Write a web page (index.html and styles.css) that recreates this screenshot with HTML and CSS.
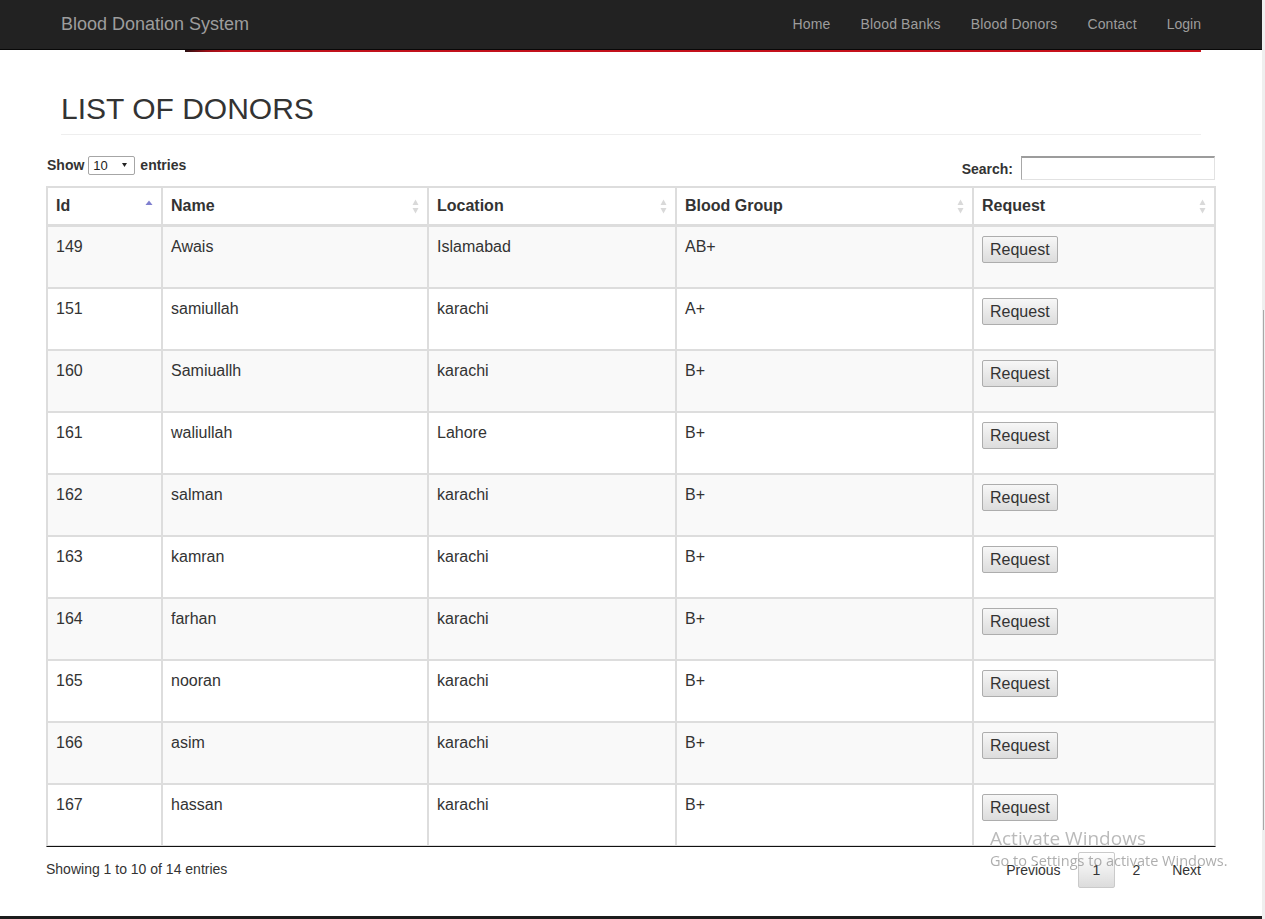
FILE: index.html
```html
<!DOCTYPE html>
<html lang="en">
<head>
<meta charset="utf-8">
<title>Blood Donation System - List of Donors</title>
<link rel="stylesheet" href="styles.css">
</head>
<body>
<nav class="navbar">
  <div class="container nav-inner">
    <a class="brand" href="#">Blood Donation System</a>
    <ul class="nav-links">
      <li><a href="#">Home</a></li>
      <li><a href="#">Blood Banks</a></li>
      <li><a href="#">Blood Donors</a></li>
      <li><a href="#">Contact</a></li>
      <li><a href="#">Login</a></li>
    </ul>
  </div>
</nav>
<div class="container"><div class="red-rule"></div></div>

<div class="container">
  <h2 class="page-header">LIST OF DONORS</h2>
</div>

<div class="dt-wrapper">
  <div class="dt-top">
    <label class="dt-length">Show
      <span class="select-wrap">
        <select class="dt-select"><option>10</option><option>25</option><option>50</option><option>100</option></select>
        <svg class="select-arrow" width="5" height="4" viewBox="0 0 5 4"><polygon points="0,0 5,0 2.5,4" fill="#222"/></svg>
      </span>
      entries</label>
    <label class="dt-filter">Search:<input class="dt-input" type="search"></label>
  </div>

  <table class="dt-table">
    <thead>
      <tr>
        <th class="c-id"><div class="th-inner"><span>Id</span><svg class="sort" width="8" height="15" viewBox="0 0 8 15"><polygon points="0.5,6 4,1.5 7.5,6" fill="#7f7fcf"/></svg></div></th>
        <th class="c-name"><div class="th-inner"><span>Name</span><svg class="sort" width="7" height="15" viewBox="0 0 7 15"><polygon points="0.5,6 3.5,0.5 6.5,6" fill="#d9d9d9"/><polygon points="0.5,9 3.5,14.5 6.5,9" fill="#d9d9d9"/></svg></div></th>
        <th class="c-loc"><div class="th-inner"><span>Location</span><svg class="sort" width="7" height="15" viewBox="0 0 7 15"><polygon points="0.5,6 3.5,0.5 6.5,6" fill="#d9d9d9"/><polygon points="0.5,9 3.5,14.5 6.5,9" fill="#d9d9d9"/></svg></div></th>
        <th class="c-grp"><div class="th-inner"><span>Blood Group</span><svg class="sort" width="7" height="15" viewBox="0 0 7 15"><polygon points="0.5,6 3.5,0.5 6.5,6" fill="#d9d9d9"/><polygon points="0.5,9 3.5,14.5 6.5,9" fill="#d9d9d9"/></svg></div></th>
        <th class="c-req"><div class="th-inner"><span>Request</span><svg class="sort" width="7" height="15" viewBox="0 0 7 15"><polygon points="0.5,6 3.5,0.5 6.5,6" fill="#d9d9d9"/><polygon points="0.5,9 3.5,14.5 6.5,9" fill="#d9d9d9"/></svg></div></th>
      </tr>
    </thead>
    <tbody>
      <tr class="odd"><td>149</td><td>Awais</td><td>Islamabad</td><td>AB+</td><td><button class="btn-req" type="button">Request</button></td></tr>
      <tr><td>151</td><td>samiullah</td><td>karachi</td><td>A+</td><td><button class="btn-req" type="button">Request</button></td></tr>
      <tr class="odd"><td>160</td><td>Samiuallh</td><td>karachi</td><td>B+</td><td><button class="btn-req" type="button">Request</button></td></tr>
      <tr><td>161</td><td>waliullah</td><td>Lahore</td><td>B+</td><td><button class="btn-req" type="button">Request</button></td></tr>
      <tr class="odd"><td>162</td><td>salman</td><td>karachi</td><td>B+</td><td><button class="btn-req" type="button">Request</button></td></tr>
      <tr><td>163</td><td>kamran</td><td>karachi</td><td>B+</td><td><button class="btn-req" type="button">Request</button></td></tr>
      <tr class="odd"><td>164</td><td>farhan</td><td>karachi</td><td>B+</td><td><button class="btn-req" type="button">Request</button></td></tr>
      <tr><td>165</td><td>nooran</td><td>karachi</td><td>B+</td><td><button class="btn-req" type="button">Request</button></td></tr>
      <tr class="odd"><td>166</td><td>asim</td><td>karachi</td><td>B+</td><td><button class="btn-req" type="button">Request</button></td></tr>
      <tr><td>167</td><td>hassan</td><td>karachi</td><td>B+</td><td><button class="btn-req" type="button">Request</button></td></tr>
    </tbody>
  </table>

  <div class="dt-bottom">
    <div class="dt-info">Showing 1 to 10 of 14 entries</div>
    <div class="dt-paginate">
      <a class="pg" href="#">Previous</a>
      <a class="pg current" href="#">1</a>
      <a class="pg" href="#">2</a>
      <a class="pg" href="#">Next</a>
    </div>
  </div>
</div>

<footer class="footer"></footer>

<div class="watermark">
  <div class="wm-title">Activate Windows</div>
  <div class="wm-sub">Go to Settings to activate Windows.</div>
</div>

<div class="scrollbar"><div class="scroll-thumb"></div></div>
</body>
</html>
```

FILE: styles.css
```css
* { box-sizing: border-box; }

html { overflow: hidden; }

body {
  margin: 0 3px 0 0;
  font-family: "Liberation Sans", Arial, Helvetica, sans-serif;
  font-size: 14px;
  line-height: 20px;
  color: #333;
  background: #fff;
}

.container {
  width: 1170px;
  margin: 0 auto;
  padding: 0 15px;
}

/* Navbar */
.navbar {
  background: #222;
  border-bottom: 1px solid #080808;
  height: 50px;
}

.nav-inner {
  display: flex;
  justify-content: space-between;
  align-items: flex-start;
  padding: 0;
  height: 49px;
}

.brand {
  display: block;
  padding: 14px 15px 15px;
  font-size: 18px;
  line-height: 20px;
  color: #9d9d9d;
  text-decoration: none;
}

.nav-links {
  display: flex;
  list-style: none;
  margin: 0;
  padding: 0;
}

.nav-links a {
  display: block;
  padding: 14px 15px 15px;
  font-size: 14px;
  line-height: 20px;
  letter-spacing: 0.15px;
  color: #9d9d9d;
  text-decoration: none;
}

.nav-links li:last-child a { letter-spacing: 0; }

.red-rule {
  height: 2px;
  margin-left: 124px;
  background: linear-gradient(to right, #2a1012 0px, #9a0f18 22px, #c0121c 45px, #c8111b 100%);
}

/* Page header */
.page-header {
  margin: 40px 0 20px;
  padding-bottom: 9px;
  border-bottom: 1px solid #eee;
  font-size: 30px;
  line-height: 33px;
  font-weight: normal;
  color: #333;
}

/* DataTable wrapper */
.dt-wrapper {
  width: 1170px;
  margin: 0 auto;
}

.dt-top {
  display: flex;
  justify-content: space-between;
  align-items: flex-start;
}

.dt-length {
  display: flex;
  align-items: center;
  height: 20px;
  gap: 4px;
  font-weight: bold;
  font-size: 14px;
  padding-left: 1px;
}

.select-wrap {
  position: relative;
  display: block;
  height: 19px;
  margin-right: 1px;
}

.dt-select {
  appearance: none;
  -webkit-appearance: none;
  display: block;
  width: 47px;
  height: 19px;
  margin: 0;
  padding: 0 0 0 4px;
  border: 1px solid #a6a6a6;
  border-radius: 2px;
  background: #fff;
  font-family: "Liberation Sans", Arial, sans-serif;
  font-size: 13px;
  color: #222;
}

.select-arrow {
  position: absolute;
  right: 8px;
  top: 7px;
  pointer-events: none;
}

.dt-filter {
  display: flex;
  align-items: center;
  margin-top: 1px;
  height: 24px;
  font-weight: bold;
  font-size: 14px;
  padding-top: 1px;
}

.dt-input {
  width: 194px;
  height: 24px;
  margin: -1px 1px 0 8px;
  padding: 2px 4px;
  border: 1px solid;
  border-color: #9c9c9c #e2e2e2 #e2e2e2 #a8a8a8;
  border-top-width: 2px;
  background: #fff;
  font-family: "Liberation Sans", Arial, sans-serif;
  font-size: 14px;
}

/* Table */
.dt-table {
  width: 1170px;
  margin-top: 6px;
  table-layout: fixed;
  border-collapse: separate;
  border-spacing: 0;
  border: 1px solid #ddd;
  border-bottom: 1px solid #111;
  font-size: 16px;
}

.dt-table th,
.dt-table td {
  border: 1px solid #ddd;
  text-align: left;
  color: #333;
}

.dt-table th {
  padding: 8px;
  line-height: 20px;
  font-weight: bold;
  border-bottom-width: 2px;
  vertical-align: bottom;
}

.c-id { width: 115px; }
.c-name { width: 266px; }
.c-loc { width: 248px; }
.c-grp { width: 297px; }
.c-req { width: 242px; }

.th-inner {
  display: flex;
  justify-content: space-between;
  align-items: center;
}

.sort { display: block; flex: none; }

.dt-table tbody tr { height: 62px; }
.dt-table tbody tr.odd td { background: #f9f9f9; }

.dt-table td {
  padding: 9px 8px 8px;
  line-height: 21px;
  vertical-align: top;
}

.btn-req {
  display: inline-block;
  vertical-align: top;
  margin: 0;
  padding: 3px 7px;
  font-family: "Liberation Sans", Arial, sans-serif;
  font-size: 16px;
  line-height: 19px;
  color: #333;
  border: 1px solid #adadad;
  border-radius: 2px;
  background: linear-gradient(to bottom, #f7f7f7 0%, #e8e8e8 55%, #dcdcdc 100%);
}

/* Bottom controls */
.dt-bottom {
  display: flex;
  justify-content: space-between;
  align-items: flex-start;
}

.dt-info {
  padding-top: 12px;
  font-size: 14px;
  line-height: 20px;
}

.dt-paginate {
  display: flex;
  padding-top: 5px;
  padding-right: 0;
}

.pg {
  display: block;
  margin-left: 2px;
  padding: 7px 14px;
  border: 1px solid transparent;
  border-radius: 2px;
  font-size: 14px;
  line-height: 20px;
  color: #333;
  text-decoration: none;
}

.pg.current {
  border-color: #cacaca;
  background: linear-gradient(to bottom, #fff 0%, #dcdcdc 100%);
}

/* Footer strip */
.footer {
  margin-top: 28px;
  height: 60px;
  background: #1c1c1c;
}

/* Windows watermark overlay */
.watermark {
  position: fixed;
  left: 990px;
  top: 829px;
  font-family: "Open Sans", "Noto Sans", sans-serif;
  pointer-events: none;
  white-space: nowrap;
}

.wm-title {
  font-size: 19px;
  line-height: 19px;
  color: rgba(140, 140, 140, 0.6);
}

.wm-sub {
  margin-top: 5px;
  font-size: 14.5px;
  line-height: 15px;
  color: rgba(120, 120, 120, 0.6);
}

/* Scrollbar edge */
.scrollbar {
  position: fixed;
  top: 0;
  right: 0;
  width: 3px;
  height: 100%;
  background: #efefef;
}

.scroll-thumb {
  margin-top: 310px;
  margin-left: 1px;
  width: 1px;
  height: 520px;
  background: #a8a8a8;
}
```
